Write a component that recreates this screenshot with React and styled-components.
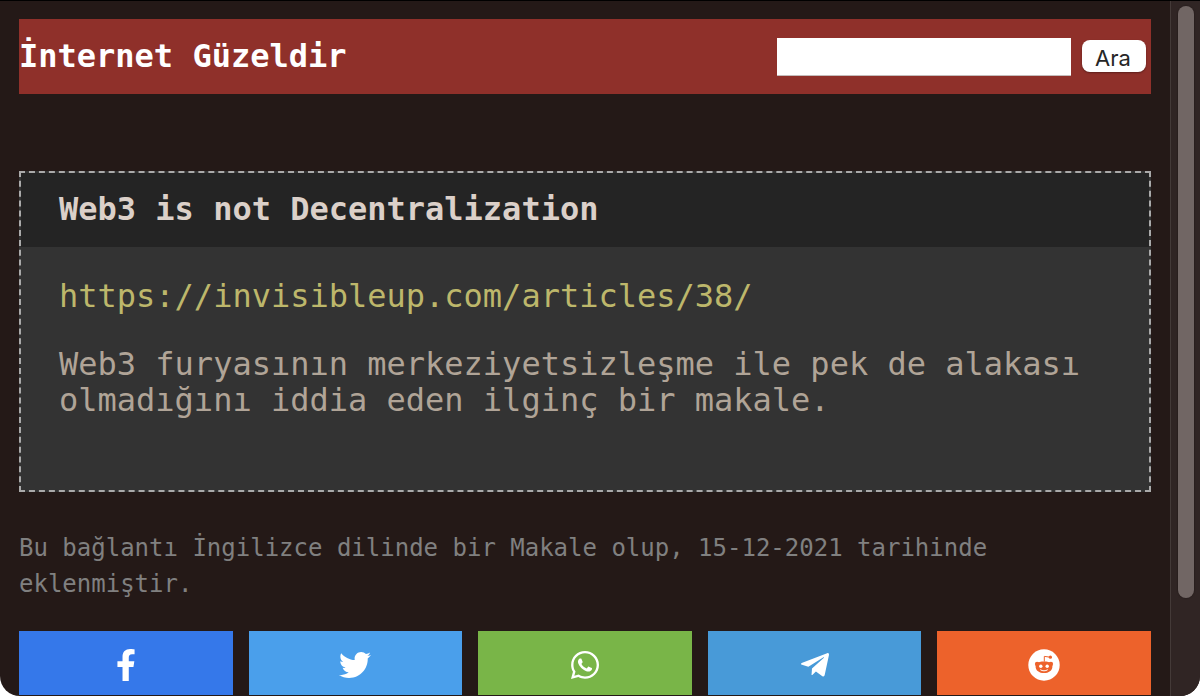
import React from "react";
import styled, { createGlobalStyle } from "styled-components";
import {
  FaFacebookF,
  FaTwitter,
  FaWhatsapp,
  FaTelegramPlane,
} from "react-icons/fa";

const GlobalStyle = createGlobalStyle`
  *, *::before, *::after { box-sizing: border-box; }
  body {
    margin: 0;
    background: #fff;
    font-family: "DejaVu Sans Mono", monospace;
  }
`;

const Window = styled.div`
  display: flex;
  min-height: 100vh;
  background: #241917;
  border-top: 1px solid #000;
  border-radius: 0 0 20px 20px;
  overflow: hidden;
`;

const Page = styled.div`
  flex: 1;
  min-width: 0;
  padding: 18px 19px 1px;
`;

const ScrollTrack = styled.div`
  flex: none;
  width: 30px;
  padding: 5px 6px 0 7px;
  background: #302524;
  border-left: 1px solid #443a38;
`;

const ScrollThumb = styled.div`
  height: 85vh;
  border-radius: 8px;
  background: #716664;
  box-shadow: 0 0 1px 1px #2a201f;
`;

const SiteHeader = styled.header`
  display: flex;
  justify-content: space-between;
  align-items: flex-start;
  padding: 19px 5px 18px 0;
  background: #8f302a;
`;

const SiteTitle = styled.a`
  color: #fff;
  font-size: 32px;
  font-weight: 700;
  line-height: 36px;
  text-decoration: none;
`;

const SearchForm = styled.form`
  display: flex;
  align-items: center;
  gap: 11px;
`;

const SearchInput = styled.input`
  width: 294px;
  height: 38px;
  padding: 4px 8px;
  border: 0;
  border-bottom: 1px solid #c4bcbb;
  border-radius: 0;
  background: #fff;
  color: #222;
  font: 22px "DejaVu Sans Mono", monospace;
`;

const SearchButton = styled.button`
  height: 32px;
  width: 64px;
  margin-bottom: 2px;
  padding: 4px 2px 0 0;
  border: 0;
  border-radius: 8px;
  background: #fff;
  box-shadow: 0 1px 2px rgba(0, 0, 0, 0.35);
  color: #262626;
  font: 22px/28px Inter, sans-serif;
`;

const Card = styled.article`
  margin-top: 77px;
  border: 2px dashed #aaa;
  background: #333;
`;

const CardTitle = styled.h1`
  margin: 0;
  padding: 18px 38px 20px;
  background: #242424;
  color: #dbd0c9;
  font-size: 32px;
  line-height: 36px;
`;

const CardBody = styled.div`
  display: flex;
  flex-direction: column;
  align-items: flex-start;
  gap: 32px;
  padding: 31px 38px 72px;
  color: #b0a497;
  font-size: 32px;
  line-height: 36px;
`;

const ArticleLink = styled.a`
  color: #bdb76b;
  text-decoration: none;
`;

const Description = styled.p`
  margin: 0;
`;

const Meta = styled.p`
  margin: 38px 0 29px;
  color: #808080;
  font-size: 24px;
  line-height: 36px;
`;

const ShareRow = styled.nav`
  display: grid;
  grid-template-columns: repeat(5, 1fr);
  gap: 16px;
`;

const ShareLink = styled.a`
  display: flex;
  align-items: center;
  justify-content: center;
  height: 64px;
  padding-top: 4px;
  background: ${({ $color }) => $color};
  color: #fff;
  font-size: 32px;
`;

// The face is cut out of the disc, so it takes the colour of the button.
function RedditIcon(props) {
  return (
    <svg width="1em" height="1em" viewBox="0 0 32 32" {...props}>
      <mask id="reddit-face">
        <rect width="32" height="32" fill="#fff" />
        <circle cx="9.1" cy="15" r="2.2" fill="#000" />
        <circle cx="22.9" cy="15" r="2.2" fill="#000" />
        <path
          d="M8.4 14.2C10 12.9 13 12.4 16 12.4s6 .5 7.6 1.8c.5 1.1.8 2.2.8 3.5 0 3.700-3.700 6.400-8.400 6.400s-8.400-2.700-8.400-6.400c0-1.300.3-2.400.8-3.500z"
          fill="#000"
        />
        <path
          d="M16.300 12.600V7.400l5.600.7"
          fill="none"
          stroke="#000"
          strokeWidth="1"
          strokeLinejoin="round"
        />
        <circle cx="22.4" cy="8.2" r="1.6" fill="#000" />
        <circle cx="12.8" cy="17.2" r="1.7" fill="#fff" />
        <circle cx="19.200" cy="17.2" r="1.7" fill="#fff" />
        <path
          d="M12.600 20.900c1.900 1.300 4.900 1.300 6.800 0"
          fill="none"
          stroke="#fff"
          strokeWidth="1"
          strokeLinecap="round"
        />
      </mask>
      <circle cx="16" cy="16" r="15.700" fill="currentColor" mask="url(#reddit-face)" />
    </svg>
  );
}

const networks = [
  { name: "Facebook", color: "#3578ea", Icon: FaFacebookF },
  { name: "Twitter", color: "#4a9feb", Icon: FaTwitter },
  { name: "WhatsApp", color: "#79b548", Icon: FaWhatsapp },
  { name: "Telegram", color: "#489ad8", Icon: FaTelegramPlane },
  { name: "Reddit", color: "#ed622b", Icon: RedditIcon },
];

export default function App() {
  return (
    <>
      <GlobalStyle />
      <Window>
        <Page>
          <SiteHeader>
            <SiteTitle href="#">İnternet Güzeldir</SiteTitle>
            <SearchForm role="search" onSubmit={(e) => e.preventDefault()}>
              <SearchInput type="text" aria-label="Ara" />
              <SearchButton type="submit">Ara</SearchButton>
            </SearchForm>
          </SiteHeader>
          <main>
            <Card>
              <CardTitle>Web3 is not Decentralization</CardTitle>
              <CardBody>
                <ArticleLink href="https://invisibleup.com/articles/38/">
                  https://invisibleup.com/articles/38/
                </ArticleLink>
                <Description>
                  Web3 furyasının merkeziyetsizleşme ile pek de alakası
                  olmadığını iddia eden ilginç bir makale.
                </Description>
              </CardBody>
            </Card>
            <Meta>
              Bu bağlantı İngilizce dilinde bir Makale olup, 15-12-2021
              tarihinde eklenmiştir.
            </Meta>
            <ShareRow>
              {networks.map(({ name, color, Icon }) => (
                <ShareLink key={name} href="#" aria-label={name} $color={color}>
                  <Icon aria-hidden="true" />
                </ShareLink>
              ))}
            </ShareRow>
          </main>
        </Page>
        <ScrollTrack aria-hidden="true">
          <ScrollThumb />
        </ScrollTrack>
      </Window>
    </>
  );
}
